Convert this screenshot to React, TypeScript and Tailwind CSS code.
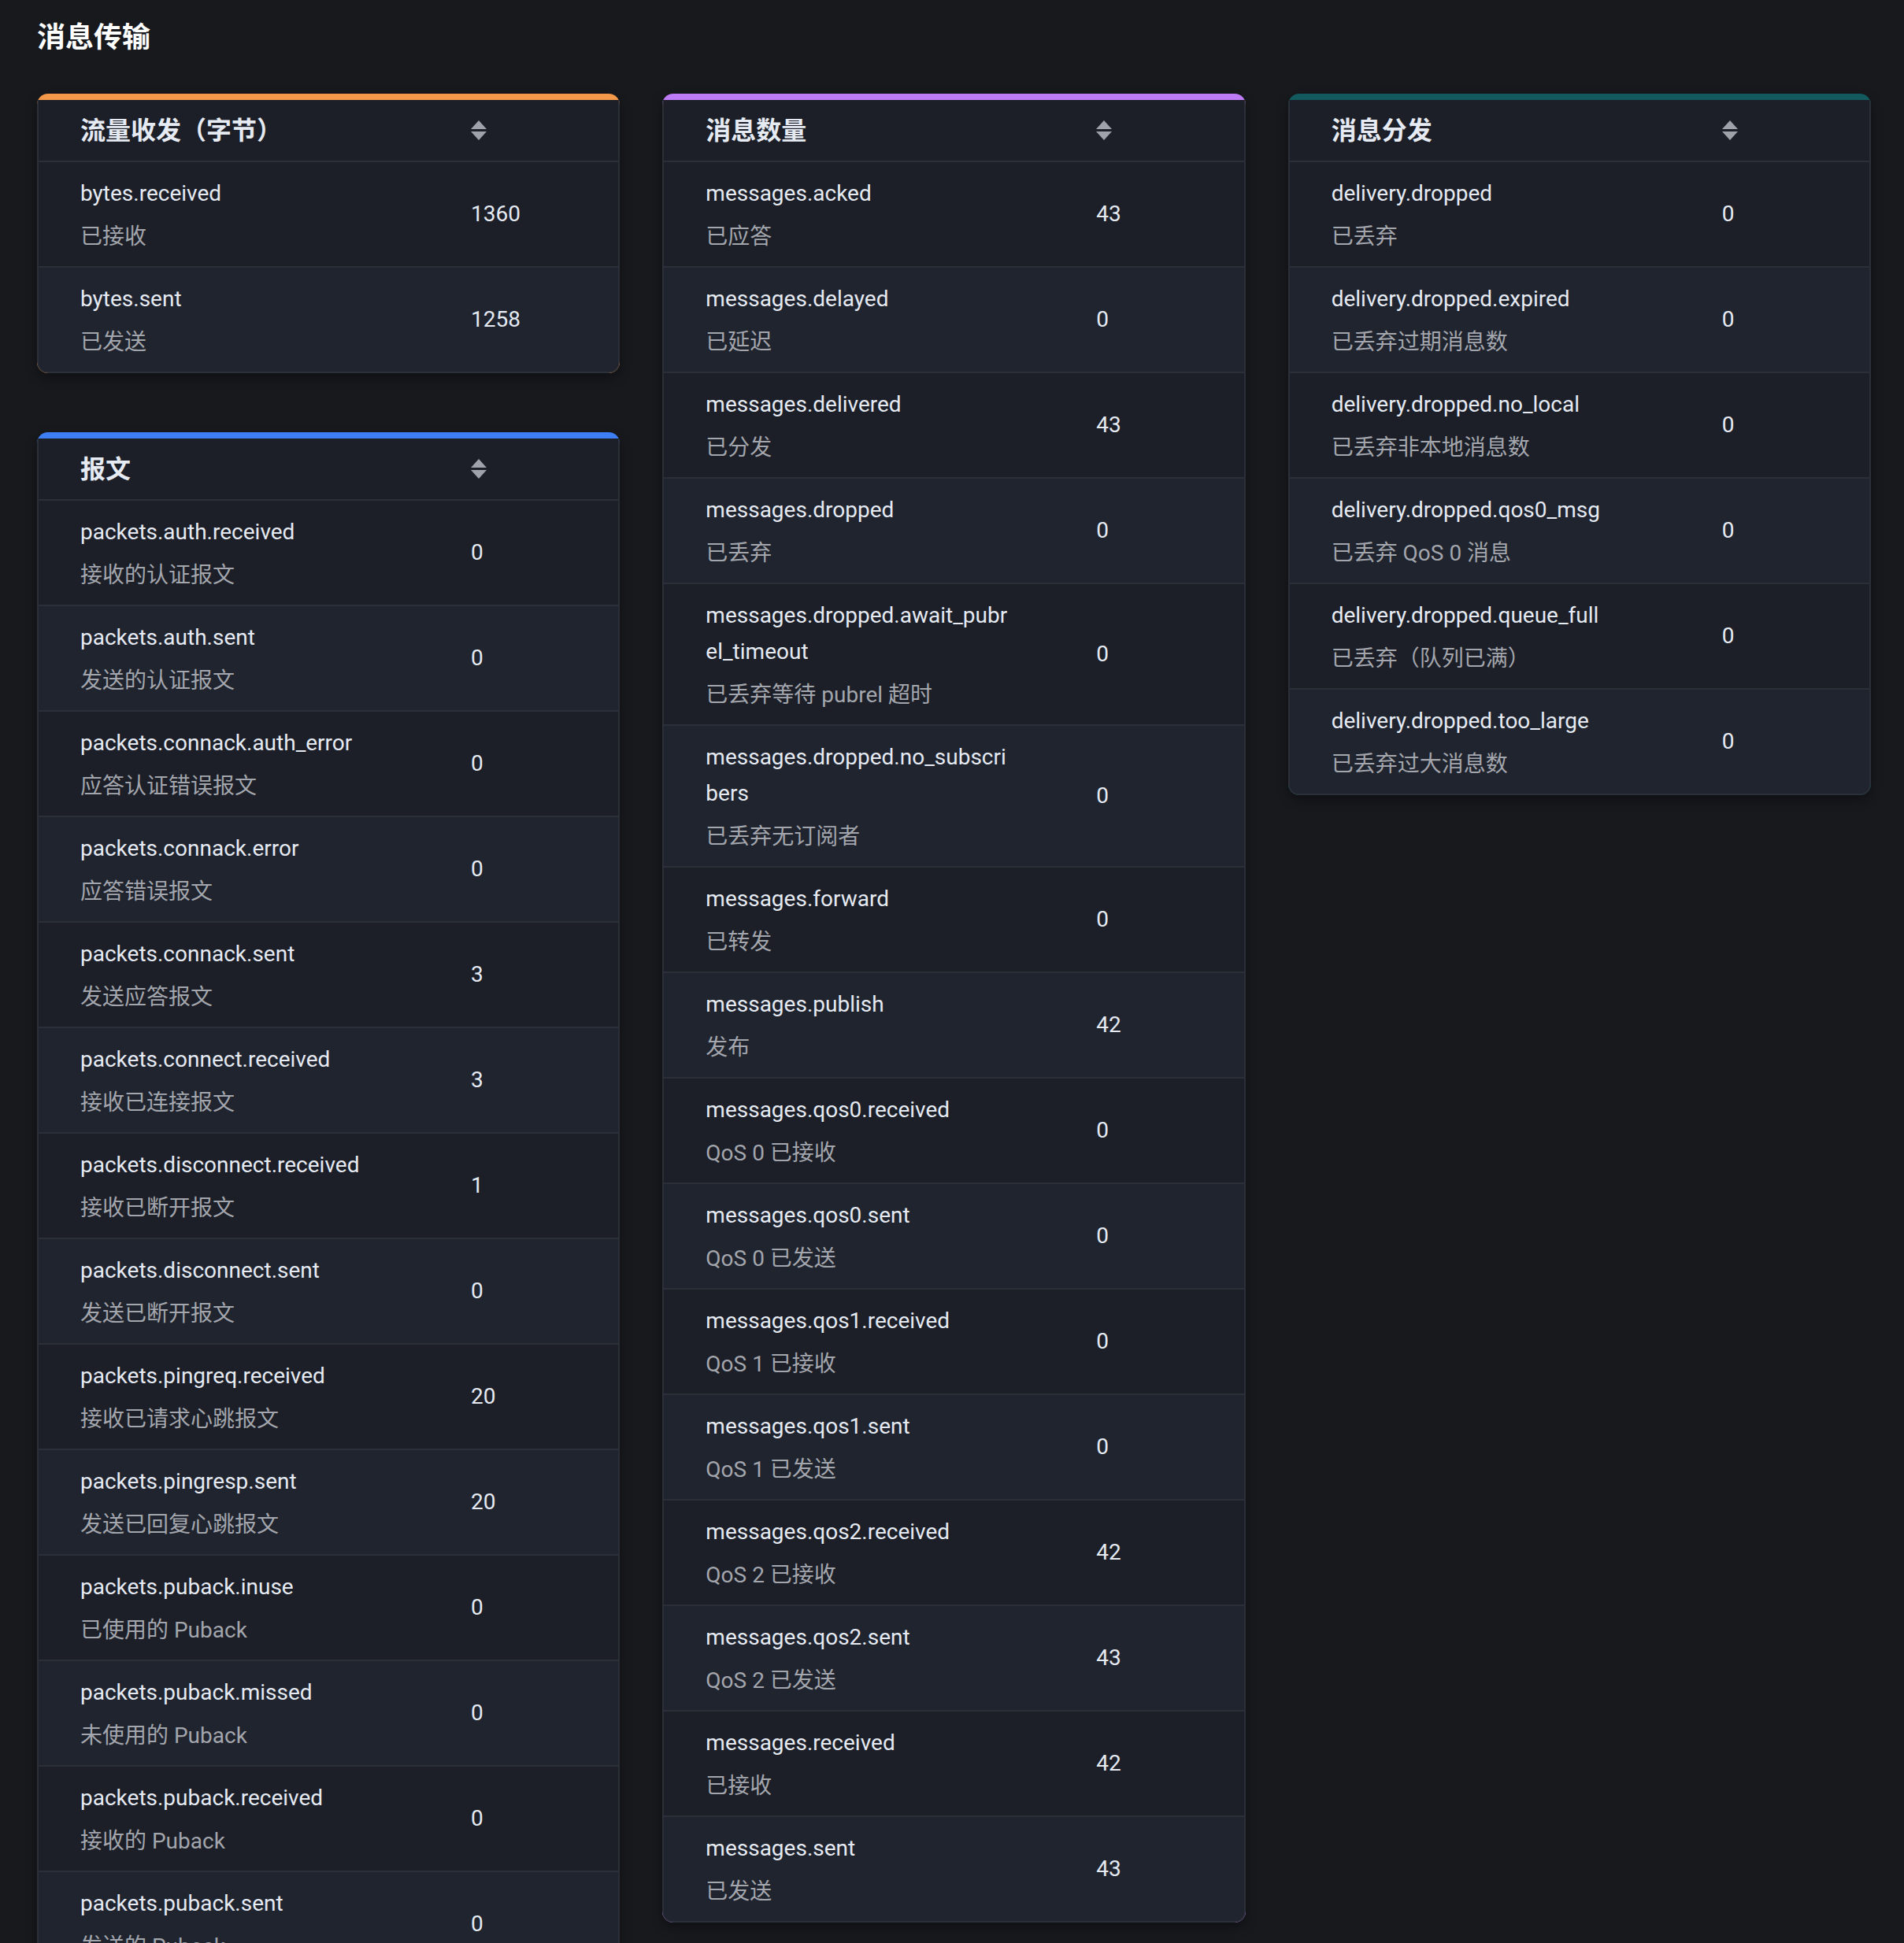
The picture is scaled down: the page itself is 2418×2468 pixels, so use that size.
type Metric = { name: string; label: string; value: number }

type Panel = { title: string; accent: string; rows: Metric[] }

const traffic: Panel = {
  title: '流量收发（字节）',
  accent: 'bg-[#f4994a]',
  rows: [
    { name: 'bytes.received', label: '已接收', value: 1360 },
    { name: 'bytes.sent', label: '已发送', value: 1258 },
  ],
}

const packets: Panel = {
  title: '报文',
  accent: 'bg-[#3d7ff2]',
  rows: [
    { name: 'packets.auth.received', label: '接收的认证报文', value: 0 },
    { name: 'packets.auth.sent', label: '发送的认证报文', value: 0 },
    { name: 'packets.connack.auth_error', label: '应答认证错误报文', value: 0 },
    { name: 'packets.connack.error', label: '应答错误报文', value: 0 },
    { name: 'packets.connack.sent', label: '发送应答报文', value: 3 },
    { name: 'packets.connect.received', label: '接收已连接报文', value: 3 },
    { name: 'packets.disconnect.received', label: '接收已断开报文', value: 1 },
    { name: 'packets.disconnect.sent', label: '发送已断开报文', value: 0 },
    { name: 'packets.pingreq.received', label: '接收已请求心跳报文', value: 20 },
    { name: 'packets.pingresp.sent', label: '发送已回复心跳报文', value: 20 },
    { name: 'packets.puback.inuse', label: '已使用的 Puback', value: 0 },
    { name: 'packets.puback.missed', label: '未使用的 Puback', value: 0 },
    { name: 'packets.puback.received', label: '接收的 Puback', value: 0 },
    { name: 'packets.puback.sent', label: '发送的 Puback', value: 0 },
    { name: 'packets.pubcomp.inuse', label: '已使用的 Pubcomp', value: 0 },
    { name: 'packets.pubcomp.missed', label: '未使用的 Pubcomp', value: 0 },
  ],
}

const messages: Panel = {
  title: '消息数量',
  accent: 'bg-[#bd7cf6]',
  rows: [
    { name: 'messages.acked', label: '已应答', value: 43 },
    { name: 'messages.delayed', label: '已延迟', value: 0 },
    { name: 'messages.delivered', label: '已分发', value: 43 },
    { name: 'messages.dropped', label: '已丢弃', value: 0 },
    { name: 'messages.dropped.await_pubrel_timeout', label: '已丢弃等待 pubrel 超时', value: 0 },
    { name: 'messages.dropped.no_subscribers', label: '已丢弃无订阅者', value: 0 },
    { name: 'messages.forward', label: '已转发', value: 0 },
    { name: 'messages.publish', label: '发布', value: 42 },
    { name: 'messages.qos0.received', label: 'QoS 0 已接收', value: 0 },
    { name: 'messages.qos0.sent', label: 'QoS 0 已发送', value: 0 },
    { name: 'messages.qos1.received', label: 'QoS 1 已接收', value: 0 },
    { name: 'messages.qos1.sent', label: 'QoS 1 已发送', value: 0 },
    { name: 'messages.qos2.received', label: 'QoS 2 已接收', value: 42 },
    { name: 'messages.qos2.sent', label: 'QoS 2 已发送', value: 43 },
    { name: 'messages.received', label: '已接收', value: 42 },
    { name: 'messages.sent', label: '已发送', value: 43 },
  ],
}

const delivery: Panel = {
  title: '消息分发',
  accent: 'bg-[#135a5e]',
  rows: [
    { name: 'delivery.dropped', label: '已丢弃', value: 0 },
    { name: 'delivery.dropped.expired', label: '已丢弃过期消息数', value: 0 },
    { name: 'delivery.dropped.no_local', label: '已丢弃非本地消息数', value: 0 },
    { name: 'delivery.dropped.qos0_msg', label: '已丢弃 QoS 0 消息', value: 0 },
    { name: 'delivery.dropped.queue_full', label: '已丢弃（队列已满）', value: 0 },
    { name: 'delivery.dropped.too_large', label: '已丢弃过大消息数', value: 0 },
  ],
}

function SortCaret() {
  return (
    <svg width="20" height="26" viewBox="0 0 20 26" className="text-[#9fa2a9]" fill="currentColor">
      <polygon points="10,0 20,11 0,11" />
      <polygon points="0,14 20,14 10,25" />
    </svg>
  )
}

function MetricCard({ panel }: { panel: Panel }) {
  return (
    <div
      className={`overflow-hidden rounded-[14px] pt-2 shadow-[0_6px_14px_rgba(0,0,0,0.35)] ${panel.accent}`}
    >
      <div className="border-x-2 border-b-2 border-[#2b2f38] bg-[#1c1f27] rounded-b-[14px] overflow-hidden">
        {/* Header */}
        <div className="flex h-[79px] items-center border-b-2 border-[#2b2f38]">
          <div className="w-[549px] shrink-0 pl-[53px] text-[32px] font-bold leading-[44px] text-[#e5eaf3]">
            {panel.title}
          </div>
          <SortCaret />
        </div>

        {/* Rows */}
        <div className="divide-y-2 divide-[#2b2f38]">
          {panel.rows.map((row, i) => (
            <div
              key={row.name}
              className={`flex items-center ${i % 2 === 1 ? 'bg-[#20242e]' : 'bg-[#1c1f27]'}`}
            >
              <div className="w-[549px] shrink-0 pt-[17px] pb-[14px] pl-[53px] pr-[104px] break-all">
                <div className="text-[28px] leading-[46px] text-[#e5eaf3]">{row.name}</div>
                <div className="mt-[9px] text-[28px] leading-[46px] text-[#a3a6ad]">{row.label}</div>
              </div>
              <div className="text-[28px] leading-[46px] text-[#e5eaf3]">{row.value}</div>
            </div>
          ))}
        </div>
      </div>
    </div>
  )
}

export default function App() {
  return (
    <div className="h-screen overflow-hidden bg-[#18191d] pl-[47px] pr-[42px] font-['Roboto','Noto_Sans_CJK_SC',sans-serif] text-[#e5eaf3]">
      <h1 className="pt-[21px] text-[36px] font-bold leading-[54px] text-white">消息传输</h1>

      <div className="mt-[44px] grid grid-cols-3 items-start gap-x-[54px]">
        <div className="flex flex-col gap-[75px]">
          <MetricCard panel={traffic} />
          <MetricCard panel={packets} />
        </div>
        <MetricCard panel={messages} />
        <MetricCard panel={delivery} />
      </div>
    </div>
  )
}
